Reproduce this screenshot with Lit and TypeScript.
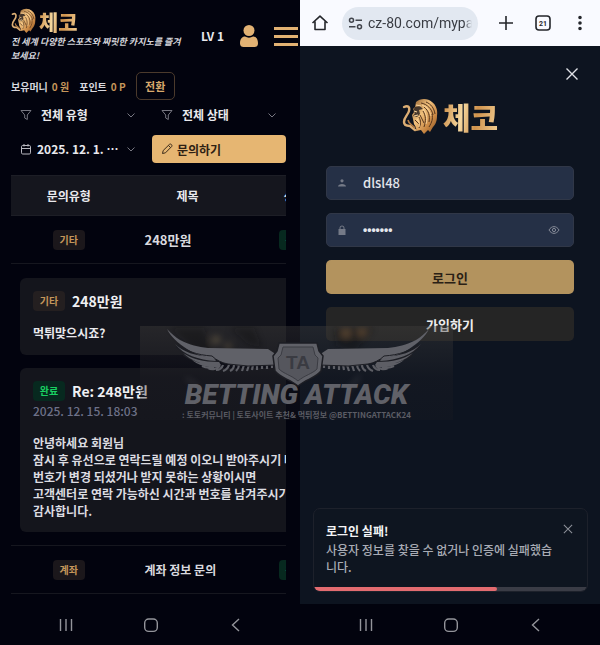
import { LitElement, html, svg, css } from "lit";
import { customElement, property } from "lit/decorators.js";

const base = css`
  * { box-sizing: border-box; }
  button, input, select {
    font: inherit;
    color: inherit;
    margin: 0;
    padding: 0;
    border: 0;
    background: none;
    appearance: none;
    outline: none;
  }
  svg { display: block; flex: none; }
  p, h2, h3 { margin: 0; }
`;

@customElement("brand-logo")
class BrandLogo extends LitElement {
  @property({ type: Boolean, reflect: true }) large = false;

  static styles = [base, css`
    :host { display: flex; align-items: center; gap: 3px; }
    .lion { width: 25px; height: 25px; }
    .word {
      font-size: 21px;
      line-height: 24px;
      font-weight: 900;
      color: transparent;
      background: linear-gradient(100deg, #c98a45, #f6d9a0 35%, #cf924c 60%, #f3cf93);
      background-clip: text;
      -webkit-background-clip: text;
    }
    :host([large]) { gap: 5px; }
    :host([large]) .lion { width: 36px; height: 36px; }
    :host([large]) .word { font-size: 30px; line-height: 36px; }
  `];

  render() {
    return html`
      <svg class="lion" viewBox="0 0 36 36" aria-hidden="true">
        <defs>
          <linearGradient id="g" x1="0" y1="0" x2="1" y2="1">
            <stop offset="0" stop-color="#8a5a2b" />
            <stop offset=".4" stop-color="#f0c07c" />
            <stop offset=".7" stop-color="#c98743" />
            <stop offset="1" stop-color="#7d4c22" />
          </linearGradient>
        </defs>
        <path d="M2 9c4-2 6 0 5 4-1 4-5 6-5 11 0 3 3 4 6 4l5 4" fill="none" stroke="#dcae74" stroke-width="2.4" stroke-linecap="round" />
        <path d="M6 22c1 5 4 4 7 8" fill="none" stroke="#b57c43" stroke-width="1.6" />
        <path d="M14 4c4-4 12-4 16 0 4 3 6 8 5 14 0 6-2 9-4 11l-3 5-2-2-4 4-3-4-5 1c1-3-1-5-2-7l-1-5-1-4 2-3-1-3 2-2z" fill="url(#g)" />
        <path d="M13 9l5-1 3 3-4 1 1 4-3 3-4-1 2-3-2-2z" fill="#18151b" opacity=".75" />
        <path d="M14 7l5 1M12 13l3 1M12 18l4-1" stroke="#f5d19b" stroke-width="1.2" fill="none" />
        <path d="M19 5c6 1 11 6 12 12M22 9c5 4 6 9 5 15M21 13c3 5 3 10 1 16M17 19c2 4 2 7 0 11M24 4c5 2 8 6 9 12M30 16c1 5 0 8-3 13M13 22l4 4M18 17l4 8" stroke="#53341d" stroke-width="1" fill="none" />
        <path d="M20 7c5 2 8 6 9 11M21 11c3 4 5 9 3 15M15 21c2 3 3 5 2 8" stroke="#ffdca4" stroke-width=".8" fill="none" />
      </svg>
      <span class="word">체코</span>
    `;
  }
}

@customElement("phone-nav")
class PhoneNav extends LitElement {
  static styles = [base, css`
    :host { display: block; background: #02030e; }
    nav { display: flex; justify-content: space-between; padding: 0 55px 0 56px; height: 41px; align-items: center; }
    button { width: 20px; height: 20px; display: grid; place-items: center; }
    svg { width: 20px; height: 20px; fill: none; stroke: #94959b; stroke-width: 1.4; }
  `];
  render() {
    return html`<nav aria-label="시스템">
      <button aria-label="최근 앱"><svg viewBox="0 0 20 20"><path d="M4.500 4v12M10 4v12M15.500 4v12" /></svg></button>
      <button aria-label="홈"><svg viewBox="0 0 20 20"><rect x="3.700" y="4" width="12.600" height="12.400" rx="4" /></svg></button>
      <button aria-label="뒤로"><svg viewBox="0 0 20 20"><path d="M14 4l-6.500 6 6.500 6" /></svg></button>
    </nav>`;
  }
}

const funnel = html`<svg class="ic" viewBox="0 0 12 12" aria-hidden="true"><path d="M1 1.500h10L7.300 6v4.500L4.700 9V6z" /></svg>`;
const chevron = html`<svg class="chev" viewBox="0 0 10 10" aria-hidden="true"><path d="M1.500 3.500L5 7l3.500-3.500" /></svg>`;

@customElement("inquiry-panel")
class InquiryPanel extends LitElement {
  static styles = [base, css`
    :host {
      display: flex;
      flex-direction: column;
      min-width: 0;
      background: #02030e;
      color: #e9e9ed;
      font-size: 12px;
      line-height: 17px;
      font-weight: 700;
    }
    .main { flex: 1; padding: 8px 14px 10px 11px; }
    .head { display: flex; align-items: center; margin-right: -13px; }
    .brand { flex: 1; min-width: 0; }
    .slogan { font-size: 9px; line-height: 14px; font-style: italic; color: #d6d6dc; padding-top: 2px; }
    .level { margin-left: 10px; font-size: 12px; white-space: nowrap; }
    .user { margin-left: 15px; width: 20px; height: 24px; }
    .menu { margin-left: 14px; width: 26px; height: 24px; }
    .user svg, .menu svg { width: 100%; height: 100%; fill: #e2b273; }
    .money { display: flex; align-items: center; font-size: 10px; margin-top: 9px; color: #d8d8de; white-space: nowrap; }
    .gold { color: #c5965a; margin-left: 4px; margin-right: 10px; }
    .swap { width: 39px; height: 28px; border: 1px solid #4b3a2c; border-radius: 5px; color: #d9aa6d; font-size: 11px; }
    .filters { display: grid; grid-template-columns: 1fr 1fr; gap: 7px; margin-top: 1px; }
    .filter { display: flex; align-items: center; height: 27px; padding: 0 9px; gap: 5px; min-width: 0; }
    .filter select, .filter button { flex: 1; min-width: 0; text-align: left; white-space: nowrap; }
    .filter select { padding-left: 4px; }
    .ic { width: 12px; height: 12px; fill: none; stroke: #777781; stroke-width: 1; }
    .cal { stroke: #b9b9c0; }
    .chev { width: 10px; height: 10px; fill: none; stroke: #777781; stroke-width: 1; }
    .write {
      display: flex; align-items: center; gap: 4px; height: 28px; padding-left: 9px;
      background: #e6b672; color: #2e2114; border-radius: 4px;
    }
    .write .ic { stroke: #3b2b1a; }
    .scroll { overflow: hidden; margin-top: 12px; }
    table { width: 120%; table-layout: fixed; border-collapse: collapse; }
    .c1 { width: 35%; }
    .c2 { width: 37%; }
    th { height: 40px; padding: 0; background: #15161e; border: solid #1d1e26; border-width: 1px 0; }
    td { height: 48px; padding: 0; border-bottom: 1px solid #16171f; }
    .mid { text-align: center; }
    .title { padding-left: 18px; color: #d9d9df; }
    .num { font-size: 13px; }
    .tag {
      display: inline-block; width: 32px; line-height: 20px; border-radius: 4px; text-align: center;
      font-size: 10px; vertical-align: middle; background: #1b171b; color: #c5965a;
    }
    .dim { background: #241f20; }
    .done { background: #07291f; color: #19d162; }
    .detail { padding: 14px 0 13px 9px; vertical-align: top; }
    .card { background: #14151c; border-radius: 6px; padding: 13px; white-space: nowrap; }
    .card + .card { margin-top: 13px; }
    .card h3 { display: flex; align-items: center; gap: 7px; font-size: 14px; line-height: 20px; color: #f0f0f3; }
    .ask { padding-top: 12px; line-height: 19px; }
    .date { font-weight: 500; line-height: 20px; color: #6d7188; }
    .reply { padding-top: 13px; line-height: 17px; color: #dcdce1; }
  `];

  render() {
    return html`
      <div class="main">
        <header class="head">
          <div class="brand">
            <brand-logo></brand-logo>
            <p class="slogan">전 세계 다양한 스포츠와 짜릿한 카지노를 즐겨<br />보세요!</p>
          </div>
          <span class="level">LV 1</span>
          <button class="user" aria-label="내 정보"><svg viewBox="0 0 20 24"><circle cx="10" cy="6.500" r="5.500" /><path d="M1 19.500C1 14 4 12.500 6 12.500c2.500 1.500 5.500 1.500 8 0 2 0 5 1.500 5 7 0 2.500-1.500 3.500-3.500 3.500h-11C2.500 23 1 22 1 19.500z" /></svg></button>
          <button class="menu" aria-label="메뉴"><svg viewBox="0 0 26 24"><path d="M1 3h24v3H1zM1 11h24v3H1zM1 19h24v3H1z" /></svg></button>
        </header>
        <div class="money">
          <span>보유머니</span><span class="gold">0 원</span>
          <span>포인트</span><span class="gold">0 P</span>
          <button class="swap">전환</button>
        </div>
        <div class="filters">
          <div class="filter">${funnel}<select aria-label="유형"><option>전체 유형</option></select>${chevron}</div>
          <div class="filter">${funnel}<select aria-label="상태"><option>전체 상태</option></select>${chevron}</div>
          <div class="filter">
            <svg class="ic cal" viewBox="0 0 12 12" aria-hidden="true"><rect x="1.500" y="2.500" width="9" height="8.500" rx="1.200" /><path d="M1.500 5.500h9M4 1v2.500M8 1v2.500" /></svg>
            <button>2025. 12. 1. ⋯</button>${chevron}
          </div>
          <button class="write">
            <svg class="ic" viewBox="0 0 12 12" aria-hidden="true"><path d="M1.500 10.500l.7-3L8.500 1.300c1.200-1 3.200 1 2.200 2.200L4.500 9.800zM7.500 2.500l2 2" /></svg>
            문의하기
          </button>
        </div>
        <div class="scroll">
          <table>
            <colgroup><col class="c1" /><col class="c2" /><col /></colgroup>
            <thead><tr><th>문의유형</th><th>제목</th><th>상태</th></tr></thead>
            <tbody>
              <tr>
                <td class="mid"><span class="tag">기타</span></td>
                <td class="title num">248만원</td>
                <td class="mid"><span class="tag done">완료</span></td>
              </tr>
              <tr>
                <td class="detail" colspan="3">
                  <section class="card">
                    <h3><span class="tag dim">기타</span>248만원</h3>
                    <p class="ask">먹튀맞으시죠?</p>
                  </section>
                  <section class="card">
                    <h3><span class="tag done">완료</span>Re: 248만원</h3>
                    <p class="date">2025. 12. 15. 18:03</p>
                    <p class="reply">안녕하세요 회원님<br />잠시 후 유선으로 연락드릴 예정 이오니 받아주시기 바랍니다.<br />번호가 변경 되셨거나 받지 못하는 상황이시면<br />고객센터로 연락 가능하신 시간과 번호를 남겨주시기<br />감사합니다.</p>
                  </section>
                </td>
              </tr>
              <tr>
                <td class="mid"><span class="tag">계좌</span></td>
                <td class="title">계좌 정보 문의</td>
                <td class="mid"><span class="tag done">완료</span></td>
              </tr>
            </tbody>
          </table>
        </div>
      </div>
      <phone-nav></phone-nav>
    `;
  }
}

@customElement("login-panel")
class LoginPanel extends LitElement {
  @property({ type: Number }) remaining = 67;

  static styles = [base, css`
    :host {
      display: flex;
      flex-direction: column;
      min-width: 0;
      background: #0d1420;
      color: #ececf0;
      font-size: 12px;
      line-height: 17px;
      font-weight: 700;
    }
    .bar { display: flex; align-items: center; justify-content: space-between; height: 46px; padding: 0 11px; background: #f9faff; }
    .bar button { width: 18px; height: 18px; }
    .bar svg { width: 18px; height: 18px; fill: none; stroke: #24262b; stroke-width: 1.6; }
    .bar .url {
      display: flex; align-items: center; gap: 5px; width: 136px; height: 33px; border-radius: 17px;
      padding: 0 6px; background: #e2e8f1; margin-left: -6px;
    }
    .bar .url svg { width: 15px; height: 15px; stroke: #41444b; stroke-width: 1.5; }
    .url input {
      flex: 1; min-width: 0; font: 400 14px/20px Roboto, sans-serif; color: #393c43;
      mask-image: linear-gradient(90deg, #000 92%, transparent);
    }
    .count { font: 700 7px Roboto, sans-serif; fill: #24262b; stroke: none; }
    .top { display: flex; justify-content: flex-end; padding: 20px 20px 0 0; }
    .close { width: 16px; height: 16px; }
    .close svg { width: 100%; height: 100%; fill: none; stroke: #dfe1e6; stroke-width: 1.4; }
    .logo { display: flex; justify-content: center; margin-top: 16px; }
    form { display: grid; gap: 13px; padding: 0 26px; margin-top: 32px; }
    .field {
      display: flex; align-items: center; height: 34px; padding: 0 13px 0 9px; gap: 15px;
      background: #253046; border: 1px solid #303747; border-radius: 5px;
    }
    .field svg { width: 12px; height: 12px; fill: #757a87; }
    .field input { flex: 1; min-width: 0; font-size: 13px; font-weight: 500; line-height: 20px; color: #e3e6ec; }
    .field .secret { font: 700 12px/20px "Liberation Sans", sans-serif; }
    .field .eye { width: 12px; height: 12px; }
    .eye svg { fill: none; stroke: #868b98; }
    .act { height: 34px; border-radius: 5px; font-size: 13px; }
    .in { background: #b3935e; color: #2a2015; }
    .up { background: #252525; color: #ededed; }
    .toast {
      margin: auto 12px 12px 13px; border: 1px solid #1d212b; border-radius: 7px; overflow: hidden;
      background: #0e1520;
    }
    .msg { display: flex; justify-content: space-between; align-items: flex-start; padding: 12px 12px 12px 12px; }
    .msg h2 { font-size: 12px; line-height: 20px; color: #f5f5f7; }
    .msg p { line-height: 17px; font-weight: 500; color: #a9acb5; }
    .msg .text { flex: 1; min-width: 0; word-break: break-all; }
    .msg .close { width: 12px; height: 12px; margin: 2px 1px 0 0; }
    .msg .close svg { stroke: #8d9099; }
    .track { height: 4px; background: #3a3c46; }
    .fill { height: 4px; background: #e36b70; border-radius: 0 2px 2px 0; }
  `];

  render() {
    const cross = html`<svg viewBox="0 0 16 16" aria-hidden="true"><path d="M2.500 2.500l11 11M13.500 2.500l-11 11" /></svg>`;
    return html`
      <div class="bar">
        <button aria-label="홈"><svg viewBox="0 0 18 18"><path d="M1.500 9L9 2.200 16.500 9M4 7.500v8h10v-8" stroke-linejoin="round" /></svg></button>
        <label class="url">
          <svg viewBox="0 0 15 15" aria-hidden="true"><circle cx="3.500" cy="4.200" r="2" /><path d="M7.500 4.200H14M1 10.800h6.500" /><circle cx="11.500" cy="10.800" r="2" /></svg>
          <input aria-label="주소" value="cz-80.com/mypa" />
        </label>
        <button aria-label="새 탭"><svg viewBox="0 0 18 18"><path d="M9 2v14M2 9h14" /></svg></button>
        <button aria-label="탭 21개"><svg viewBox="0 0 18 18"><rect x="2" y="2" width="14" height="14" rx="3" /><text class="count" x="9" y="11.500" text-anchor="middle">21</text></svg></button>
        <button aria-label="더보기"><svg viewBox="0 0 18 18"><path d="M9 3.500v.01M9 9v.01M9 14.500v.01" stroke-width="3.600" stroke-linecap="round" /></svg></button>
      </div>
      <div class="top"><button class="close" aria-label="닫기">${cross}</button></div>
      <div class="logo"><brand-logo large></brand-logo></div>
      <form @submit=${(e: Event) => e.preventDefault()}>
        <label class="field">
          <svg viewBox="0 0 12 12" aria-hidden="true"><circle cx="6" cy="3.800" r="1.600" /><path d="M2 9.500c0-3.400 8-3.400 8 0z" /></svg>
          <input aria-label="아이디" value="dlsl48" />
        </label>
        <label class="field">
          <svg viewBox="0 0 12 12" aria-hidden="true"><path d="M2.500 5h1V4c0-3.400 5-3.400 5 0v1h1v6h-7zM4.500 5h3V4c0-2-3-2-3 0z" fill-rule="evenodd" /></svg>
          <input class="secret" type="password" aria-label="비밀번호" value="1234567" />
          <button class="eye" type="button" aria-label="비밀번호 보기"><svg viewBox="0 0 12 12"><path d="M1 6c2.500-4.500 7.500-4.500 10 0-2.500 4.500-7.500 4.500-10 0z" /><circle cx="6" cy="6" r="1.600" /></svg></button>
        </label>
        <button class="act in">로그인</button>
        <button class="act up" type="button">가입하기</button>
      </form>
      <section class="toast" role="alert">
        <div class="msg">
          <div class="text">
            <h2>로그인 실패!</h2>
            <p>사용자 정보를 찾을 수 없거나 인증에 실패했습니다.</p>
          </div>
          <button class="close" aria-label="알림 닫기">${cross}</button>
        </div>
        <div class="track"><div class="fill" style="width:${this.remaining}%"></div></div>
      </section>
      <phone-nav></phone-nav>
    `;
  }
}

@customElement("water-mark")
class WaterMark extends LitElement {
  static styles = [base, css`
    :host { display: block; pointer-events: none; position: relative; }
    .plate {
      overflow: hidden; height: 94px;
      background: linear-gradient(180deg, rgba(66, 64, 62, .4), rgba(30, 30, 36, .35) 55%, rgba(26, 27, 34, .3));
      display: flex; flex-direction: column; align-items: center;
    }
    .art { width: 313px; height: 94px; position: absolute; left: 0; top: 0; }
    .name {
      margin-top: 53px; font: italic 900 28px/32px Roboto, sans-serif; color: #606168; white-space: nowrap;
    }
    .sub { font-size: 8px; line-height: 8px; font-weight: 700; color: #5b5c64; white-space: nowrap; }
    .ta { font: 700 19px "Liberation Sans", sans-serif; fill: #3a3b42; }
  `];

  render() {
    const wing = svg`
      <path fill="none" stroke="#1d1e24" stroke-width="3.500" d="M37 20c8 8 20 11 40 14M44 28c8 6 18 8 36 9" />
      <path fill="#5d5e65" d="M35 18c8 8 20 12 38 13l3 4C58 34 44 29 35 18zM43 27c9 6 20 9 36 9l2 3c-17 1-30-4-38-12zM52 34c8 4 18 5 29 5l-2 2c-10 1-20-1-27-7z" />
      <path fill="none" stroke="#5d5e65" stroke-width="2.200" d="M62 40c4 2 8 2 12 1M68 42c4 2 9 1 12-2M76 44c3 0 6-2 7-5M83 45c3-1 5-3 6-6M90 45c2-1 4-3 4-6M96 45c2-2 3-3 3-6M102 45l2-6M107 45l2-6M112 44l1-5M117 44v-5M122 43v-5M127 43v-5M132 42v-4" />
      <path fill="#606168" d="M27 3c5 5 8 8 13 11 10 5 18 7 28 8l60 1 6 4 5 6-2 6-29 1c-13 0-24-2-33-7-10-2-19-4-28-10C38 17 31 11 27 3z" />
      <path fill="none" stroke="#1d1e24" stroke-width="1" d="M37 17c8 8 20 12 35 13 4 4 10 7 16 8l20 2 29-1" />`;
    return html`
      <div class="plate">
        <svg class="art" viewBox="0 0 313 94" aria-hidden="true">
          <defs><filter id="soft"><feGaussianBlur stdDeviation="3" /></filter></defs>
          <g filter="url(#soft)" opacity=".35">
            <path d="M30 2h34l10 30-20-8zM90 2h24l8 20-14-4zM194 2h40l-20 24-18-6z" fill="#0c0c10" />
            <circle cx="76" cy="14" r="5" fill="#8d7a55" /><circle cx="88" cy="20" r="4" fill="#7c6a48" />
            <circle cx="206" cy="7" r="4" fill="#a06a35" /><circle cx="222" cy="6" r="4" fill="#94612f" />
            <path d="M46 52l12 8M220 50l-12 14" stroke="#77777c" stroke-width="2" />
          </g>
          <g>${wing}</g>
          <g transform="translate(316 0) scale(-1 1)">${wing}</g>
          <path d="M139 17h38l2 8 4 5-2 15c-5 7-15 8-23 15-8-7-18-8-23-15l-2-15 4-5z" fill="#606168" stroke="#1d1e24" stroke-width="1.500" />
          <path d="M143 21h30l2 8 3 3-1 11c-5 5-12 6-19 12-7-6-14-7-19-12l-1-11 3-3z" fill="#55565d" stroke="#3b3c43" stroke-width="1" />
          <text class="ta" x="158" y="43" text-anchor="middle">TA</text>
        </svg>
        <div class="name">BETTING ATTACK</div>
        <div class="sub">: 토토커뮤니티 | 토토사이트 추천&amp; 먹튀정보 @BETTINGATTACK24</div>
      </div>
    `;
  }
}

@customElement("app-root")
class AppRoot extends LitElement {
  static styles = css`
    :host {
      display: block;
      position: relative;
      background: #fff;
      font-family: "Noto Sans CJK KR", "Noto Sans", sans-serif;
    }
    .phones { display: grid; grid-template-columns: 1fr 1fr; }
    .mark { position: absolute; left: 50%; top: 326px; width: 313px; margin-left: -160px; }
  `;
  render() {
    return html`
      <div class="phones">
        <inquiry-panel></inquiry-panel>
        <login-panel></login-panel>
      </div>
      <water-mark class="mark"></water-mark>
    `;
  }
}
